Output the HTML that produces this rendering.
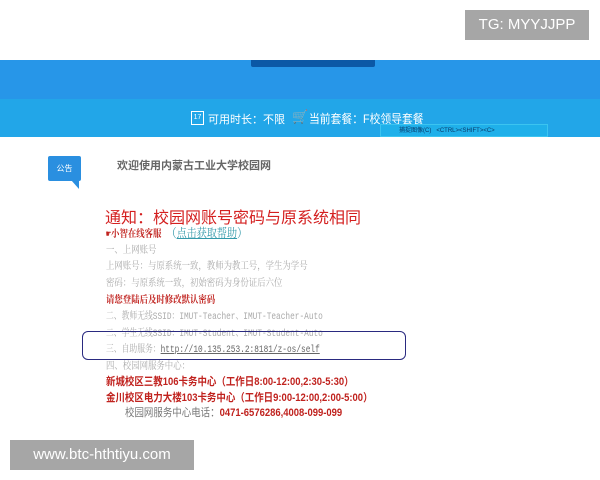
<!DOCTYPE html><html><head><meta charset="utf-8"><style>
body{margin:0;width:600px;height:480px;background:#fff;position:relative;overflow:hidden;font-family:"Liberation Sans","Noto Sans CJK SC",sans-serif}
div{position:absolute}
.t{white-space:nowrap;left:106px;font-size:10px;color:#aaa;font-family:"Liberation Mono","Noto Serif CJK SC",monospace;transform:scaleX(0.84);transform-origin:0 0}
.r{color:#c0221e;font-weight:bold}
.s{font-family:'Liberation Sans','Noto Sans CJK SC',sans-serif;font-size:11px}
</style></head><body>
<div style="left:0;top:60px;width:600px;height:39px;background:#2796e8"></div>
<div style="left:0;top:99px;width:600px;height:38px;background:#22a6e8"></div>
<div style="left:251px;top:60px;width:124px;height:7px;background:#0b58a6;border-radius:0 0 2px 2px"></div>
<div style="left:191px;top:111px;width:13px;height:14px;border:1.5px solid #fff;box-sizing:border-box;font-size:7px;color:#fff;text-align:center;line-height:11px">17</div>
<div style="left:208px;top:111px;font-size:11px;color:#fff;white-space:nowrap">可用时长：不限</div>
<div style="left:292px;top:109px;font-size:13px;color:#fff">🛒</div>
<div style="left:309px;top:110px;font-size:12px;color:#fff;white-space:nowrap;transform:scaleX(0.9);transform-origin:0 0">当前套餐：F校领导套餐</div>
<div style="left:380px;top:124px;width:168px;height:13px;background:#1fb0ea;border:1px solid #3bc4f0;font-size:6px;color:#0a3a6a;line-height:12px;box-sizing:border-box;padding-left:18px;white-space:nowrap">捕捉图像(C) &nbsp; &lt;CTRL&gt;&lt;SHIFT&gt;&lt;C&gt;</div>
<div style="left:48px;top:156px;width:33px;height:25px;background:#2a8fe0;border-radius:2px;color:#fff;font-size:8px;text-align:center;line-height:25px">公告</div>
<div style="left:71px;top:180px;width:0;height:0;border-left:8px solid transparent;border-top:9px solid #2a8fe0"></div>
<div style="left:117px;top:157px;font-size:11px;color:#666;font-weight:bold;white-space:nowrap">欢迎使用内蒙古工业大学校园网</div>
<div style="left:105px;top:204px;font-size:16px;color:#d42020;white-space:nowrap">通知：校园网账号密码与原系统相同</div>
<div class="t r" style="top:224px">☛小智在线客服 <span style="color:#39a;font-weight:normal;font-size:12px">（<u>点击获取帮助</u>）</span></div>
<div class="t" style="top:241px">一、上网账号</div>
<div class="t" style="top:257px">上网账号：与原系统一致，教师为教工号，学生为学号</div>
<div class="t" style="top:274px">密码：与原系统一致，初始密码为身份证后六位</div>
<div class="t r" style="top:291px">请您登陆后及时修改默认密码</div>
<div class="t" style="top:307px;transform:scaleX(0.78)">二、教师无线SSID：IMUT-Teacher、IMUT-Teacher-Auto</div>
<div class="t" style="top:324px;transform:scaleX(0.78)">二、学生无线SSID：IMUT-Student、IMUT-Student-Auto</div>
<div style="left:82px;top:331px;width:324px;height:29px;border:1.5px solid #2a2a80;border-radius:6px;box-sizing:border-box"></div>
<div class="t" style="top:340px;transform:scaleX(0.78)">三、自助服务：<u style="color:#666">http://10.135.253.2:8181/z-os/self</u></div>
<div class="t" style="top:357px">四、校园网服务中心：</div>
<div class="t r s" style="top:373px;transform:scaleX(0.86)">新城校区三教106卡务中心（工作日8:00-12:00,2:30-5:30）</div>
<div class="t r s" style="top:389px;transform:scaleX(0.86)">金川校区电力大楼103卡务中心（工作日9:00-12:00,2:00-5:00）</div>
<div class="t s" style="left:125px;top:404px;color:#777;transform:scaleX(0.86)">校园网服务中心电话：<b style="color:#c0221e">0471-6576286,4008-099-099</b></div>
<div style="left:465px;top:10px;width:124px;height:30px;background:#a6a6a6;color:#fff;font-size:15px;text-align:center;line-height:30px">TG: MYYJJPP</div>
<div style="left:10px;top:440px;width:184px;height:30px;background:#a6a6a6;color:#fff;font-size:15px;text-align:center;line-height:30px">www.btc-hthtiyu.com</div>
</body></html>
